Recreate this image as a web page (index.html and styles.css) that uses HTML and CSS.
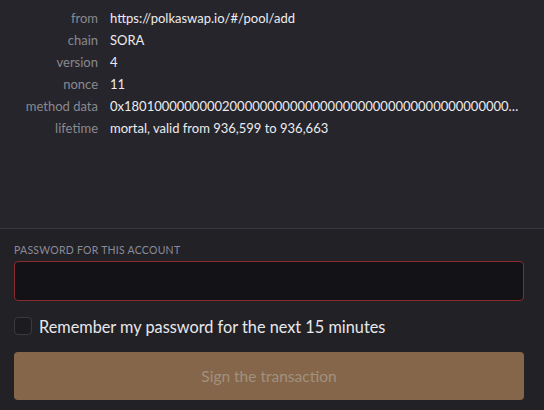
FILE: index.html
```html
<!DOCTYPE html>
<html>
<head>
<meta charset="utf-8">
<link rel="stylesheet" href="styles.css">
</head>
<body>
<div class="page">
  <section class="details">
    <div class="row"><div class="label">from</div><div class="value">https://polkaswap.io/#/pool/add</div></div>
    <div class="row"><div class="label">chain</div><div class="value">SORA</div></div>
    <div class="row"><div class="label">version</div><div class="value">4</div></div>
    <div class="row"><div class="label">nonce</div><div class="value">11</div></div>
    <div class="row"><div class="label">method data</div><div class="value ellipsis">0x180100000000020000000000000000000000000000000000000000000000000000000000000000000000</div></div>
    <div class="row"><div class="label">lifetime</div><div class="value">mortal, valid from 936,599 to 936,663</div></div>
  </section>
  <section class="signing">
    <div class="field-label">Password for this account</div>
    <div class="input"></div>
    <label class="remember"><span class="checkbox"></span><span class="remember-text">Remember my password for the next 15 minutes</span></label>
    <div class="button">Sign the transaction</div>
  </section>
</div>
</body>
</html>
```
FILE: styles.css
```css
html, body {
  margin: 0;
  padding: 0;
  background: #26252b;
}
body {
  font-family: Lato, "Noto Sans", sans-serif;
  width: 544px;
  height: 410px;
  overflow: hidden;
}
.page {
  display: flex;
  flex-direction: column;
  height: 410px;
}
.details {
  height: 221px;
  padding-top: 7px;
}
.row {
  display: flex;
  height: 22px;
  line-height: 22px;
  font-size: 13px;
}
.label {
  width: 98px;
  flex: none;
  text-align: right;
  color: #8a8990;
}
.value {
  margin-left: 12px;
  color: #ececef;
  min-width: 0;
  max-width: 412px;
}
.ellipsis {
  white-space: nowrap;
  overflow: hidden;
  text-overflow: ellipsis;
}
.signing {
  flex: 1;
  border-top: 1px solid #3a3940;
  background: #222126;
  padding: 0 20px 0 14px;
  display: flex;
  flex-direction: column;
}
.field-label {
  margin-top: 14px;
  font-size: 10.5px;
  line-height: 14px;
  text-transform: uppercase;
  letter-spacing: 0.25px;
  color: #8a8b99;
}
.input {
  margin-top: 4px;
  height: 38px;
  background: #131217;
  border: 1px solid #8a2a2f;
  border-radius: 4px;
}
.remember {
  display: flex;
  align-items: center;
  margin-top: 16px;
  height: 18px;
}
.checkbox {
  width: 16px;
  height: 16px;
  border: 1px solid #3a3a41;
  border-radius: 4px;
  background: #1c1b20;
  flex: none;
}
.remember-text {
  margin-left: 7px;
  font-size: 16.3px;
  color: #e8e8ec;
}
.button {
  margin-top: 17px;
  height: 48px;
  line-height: 48px;
  background: #85664a;
  border-radius: 4px;
  text-align: center;
  font-size: 15.5px;
  color: #a0917f;
}
```
